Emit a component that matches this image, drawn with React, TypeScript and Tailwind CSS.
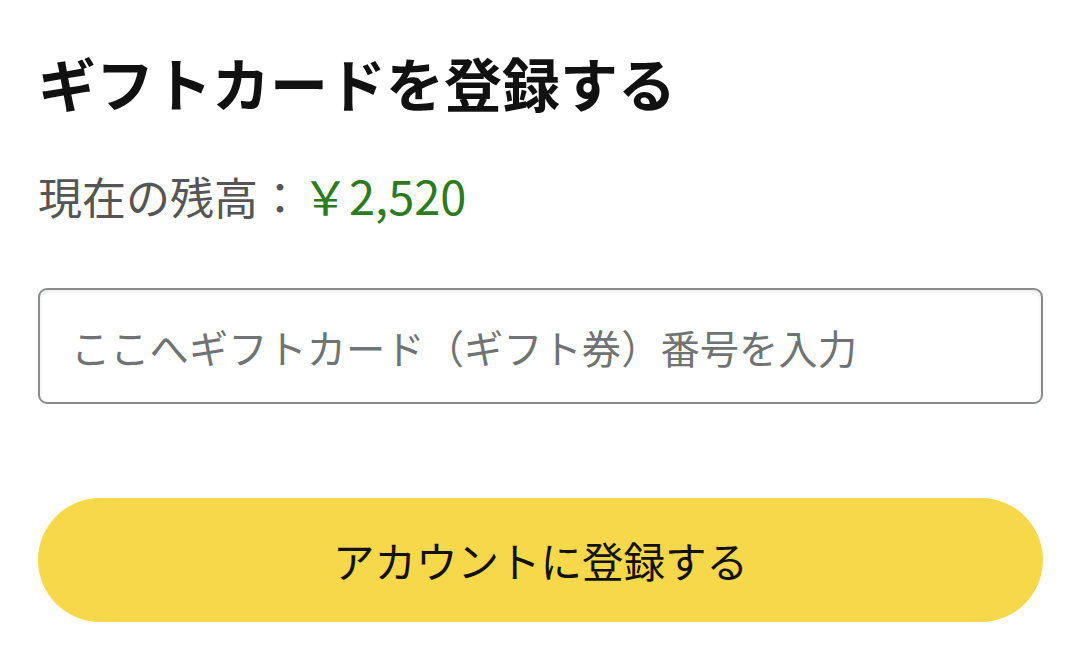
import React from "react";

const GiftCardRedeem = () => {
  return (
    <div
      className="w-[1079px] h-[666px] bg-white pl-[38px] pr-[36px] pt-[53px] overflow-hidden"
      style={{ fontFamily: '"Noto Sans CJK JP", "Noto Sans", sans-serif' }}
    >
      <h1 className="font-bold text-[58px] leading-none text-[#111111]">
        ギフトカードを登録する
      </h1>
      <p className="mt-[60px] text-[44px] leading-none text-[#555555]">
        現在の残高：<span className="text-[47px] text-[#2e7a1e]">￥2,520</span>
      </p>
      <div className="mt-[70px]">
        <input
          type="text"
          placeholder="ここへギフトカード（ギフト券）番号を入力"
          className="w-full h-[116px] rounded-[9px] border-2 border-[#8a8c8c] bg-white px-[31px] text-[39.3px] text-[#111] placeholder:text-[#707373] shadow-[inset_0_2px_4px_rgba(0,0,0,0.08)] outline-none"
        />
      </div>
      <button className="mt-[94px] w-full h-[124px] rounded-full bg-[#f7d84a] text-[41.5px] text-[#111111]">
        アカウントに登録する
      </button>
    </div>
  );
};

export default function App() {
  return <GiftCardRedeem />;
}
